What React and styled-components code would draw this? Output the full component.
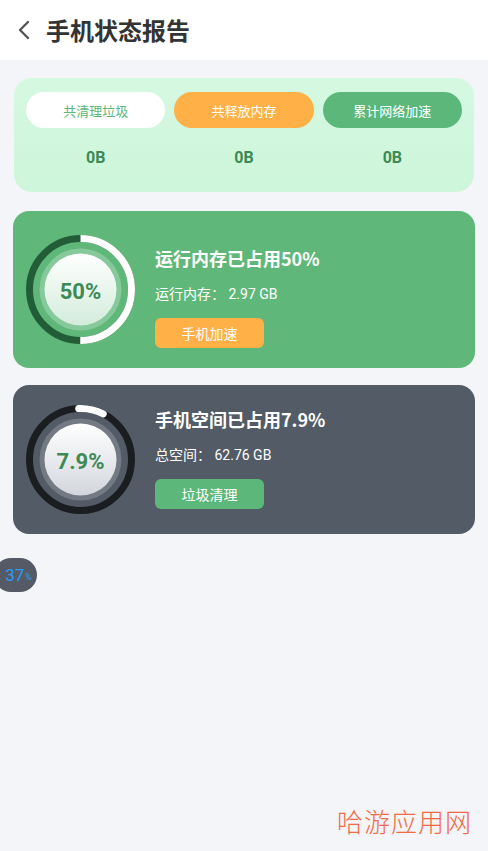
import React from "react";
import styled, { createGlobalStyle } from "styled-components";

const Global = createGlobalStyle`
  html, body { margin: 0; padding: 0; background: #f4f5f9; }
  body { font-family: Roboto, "Noto Sans CJK SC", sans-serif; min-height: 851px; }
  * { box-sizing: border-box; }
`;

const Page = styled.div`
  width: 488px;
  min-height: 851px;
  background: #f4f5f9;
  position: relative;
  overflow: hidden;
`;

const Header = styled.div`
  height: 60px;
  background: #fff;
  display: flex;
  align-items: center;
  padding-left: 17px;
  gap: 15px;
`;

const Title = styled.h1`
  margin: 0;
  font-size: 24px;
  font-weight: 700;
  color: #333;
  font-family: "Noto Sans CJK SC", sans-serif;
  line-height: 1;
  margin-top: -1px;
`;

const Content = styled.div`
  padding: 18px 13px 0 13px;
  display: flex;
  flex-direction: column;
  gap: 17px;
`;

const StatsCard = styled.div`
  margin: 0 1px 2px 1px;
  height: 114px;
  border-radius: 18px;
  background: linear-gradient(180deg, #d5f8e1 0%, #cdf6da 100%);
  padding: 14px 12px 0 12px;
  display: grid;
  grid-template-columns: repeat(3, 1fr);
  align-content: start;
  column-gap: 9px;
`;

const Pill = styled.div`
  height: 36px;
  border-radius: 18px;
  background: ${(p) => p.$bg};
  color: ${(p) => p.$fg};
  display: flex;
  align-items: center;
  justify-content: center;
  font-size: 13px;
  font-family: "Noto Sans CJK SC", sans-serif;
`;

const Value = styled.div`
  text-align: center;
  font-size: 16px;
  font-weight: 700;
  color: #3c8a55;
  padding-top: 20px;
  line-height: 20px;
`;

const Card = styled.div`
  height: ${(p) => p.$h}px;
  border-radius: 16px;
  background: ${(p) => p.$bg};
  display: flex;
  align-items: center;
  padding-left: 13px;
  gap: 20px;
`;

const Ring = styled.div`
  width: 109px;
  height: 109px;
  position: relative;
  flex: none;
`;

const RingLabel = styled.div`
  position: absolute;
  inset: 0;
  display: flex;
  align-items: center;
  justify-content: center;
  padding-top: 3px;
  font-size: 22px;
  font-weight: 700;
  color: #3c8a55;
`;

const Info = styled.div`
  display: flex;
  flex-direction: column;
  margin-top: ${(p) => p.$mt}px;
  color: #fff;
`;

const CardTitle = styled.div`
  font-size: 18px;
  font-weight: 700;
  line-height: 24px;
  font-family: "Noto Sans CJK SC", sans-serif;
`;

const CardSub = styled.div`
  font-size: 14px;
  line-height: 20px;
  margin-top: 14px;
  font-family: Roboto, "Noto Sans CJK SC", sans-serif;
`;

const ActionButton = styled.div`
  margin-top: 14px;
  width: 109px;
  height: 30px;
  border-radius: 6px;
  background: ${(p) => p.$bg};
  color: #fff;
  font-size: 14px;
  display: flex;
  align-items: center;
  justify-content: center;
  font-family: "Noto Sans CJK SC", sans-serif;
`;

const FloatBall = styled.div`
  position: absolute;
  left: -6px;
  top: 558px;
  width: 43px;
  height: 34px;
  border-radius: 17px;
  background: #545a66;
  color: #2d9cf5;
  display: flex;
  align-items: center;
  justify-content: center;
  padding-left: 6px;
  font-size: 17px;
  font-family: Roboto, sans-serif;
`;

const Small = styled.span`
  font-size: 9px;
  margin-left: 1px;
  margin-top: 3px;
`;

const Watermark = styled.div`
  position: absolute;
  right: 16px;
  top: 802px;
  font-size: 26px;
  color: #f26a44;
  font-weight: 300;
  letter-spacing: 1px;
  font-family: "Noto Sans CJK SC", sans-serif;
`;

function Gauge({ pct, track, mid, diskFrom, diskTo, round, label, id }) {
  const r = 51;
  const c = 2 * Math.PI * r;
  const len = (pct / 100) * c;
  return (
    <Ring>
      <svg width="109" height="109" viewBox="0 0 109 109">
        <defs>
          <linearGradient id={id} x1="0" y1="0" x2="0" y2="1">
            <stop offset="0" stopColor={diskFrom} />
            <stop offset="1" stopColor={diskTo} />
          </linearGradient>
        </defs>
        <circle cx="54.5" cy="54.5" r={r} fill="none" stroke={track} strokeWidth="7" />
        <circle
          cx="54.5"
          cy="54.5"
          r={r}
          fill="none"
          stroke="#fff"
          strokeWidth="7"
          strokeLinecap={round ? "round" : "butt"}
          strokeDasharray={`${len} ${c}`}
          transform={`rotate(${round ? -92 : -90} 54.5 54.5)`}
        />
        <circle cx="54.5" cy="54.5" r="41" fill={mid} />
        <circle cx="54.5" cy="54.5" r="36" fill={`url(#${id})`} />
      </svg>
      <RingLabel>{label}</RingLabel>
    </Ring>
  );
}

export default function App() {
  return (
    <Page>
      <Global />
      <Header>
        <svg width="14" height="20" viewBox="0 0 14 20">
          <path d="M11 2 L3 10 L11 18" fill="none" stroke="#555" strokeWidth="2.4" strokeLinecap="round" strokeLinejoin="round" />
        </svg>
        <Title>手机状态报告</Title>
      </Header>
      <Content>
        <StatsCard>
          <Pill $bg="#ffffff" $fg="#5cb87a">共清理垃圾</Pill>
          <Pill $bg="#ffb047" $fg="#ffffff">共释放内存</Pill>
          <Pill $bg="#5cb87a" $fg="#ffffff">累计网络加速</Pill>
          <Value>0B</Value>
          <Value>0B</Value>
          <Value>0B</Value>
        </StatsCard>
        <Card $h={157} $bg="#5fb87a">
          <Gauge
            id="g1"
            pct={50}
            track="#235d37"
            mid="#86c99a"
            diskFrom="#ffffff"
            diskTo="#d3ecdb"
            label="50%"
          />
          <Info $mt={15}>
            <CardTitle>运行内存已占用50%</CardTitle>
            <CardSub>运行内存： 2.97 GB</CardSub>
            <ActionButton $bg="#ffb047">手机加速</ActionButton>
          </Info>
        </Card>
        <Card $h={149} $bg="#525b66">
          <Gauge
            id="g2"
            pct={7.9}
            round
            track="#1b1e20"
            mid="#737a84"
            diskFrom="#ffffff"
            diskTo="#d2d6dc"
            label="7.9%"
          />
          <Info $mt={-3}>
            <CardTitle>手机空间已占用7.9%</CardTitle>
            <CardSub>总空间： 62.76 GB</CardSub>
            <ActionButton $bg="#5cb87a">垃圾清理</ActionButton>
          </Info>
        </Card>
      </Content>
      <FloatBall>
        37<Small>%</Small>
      </FloatBall>
      <Watermark>哈游应用网</Watermark>
    </Page>
  );
}
